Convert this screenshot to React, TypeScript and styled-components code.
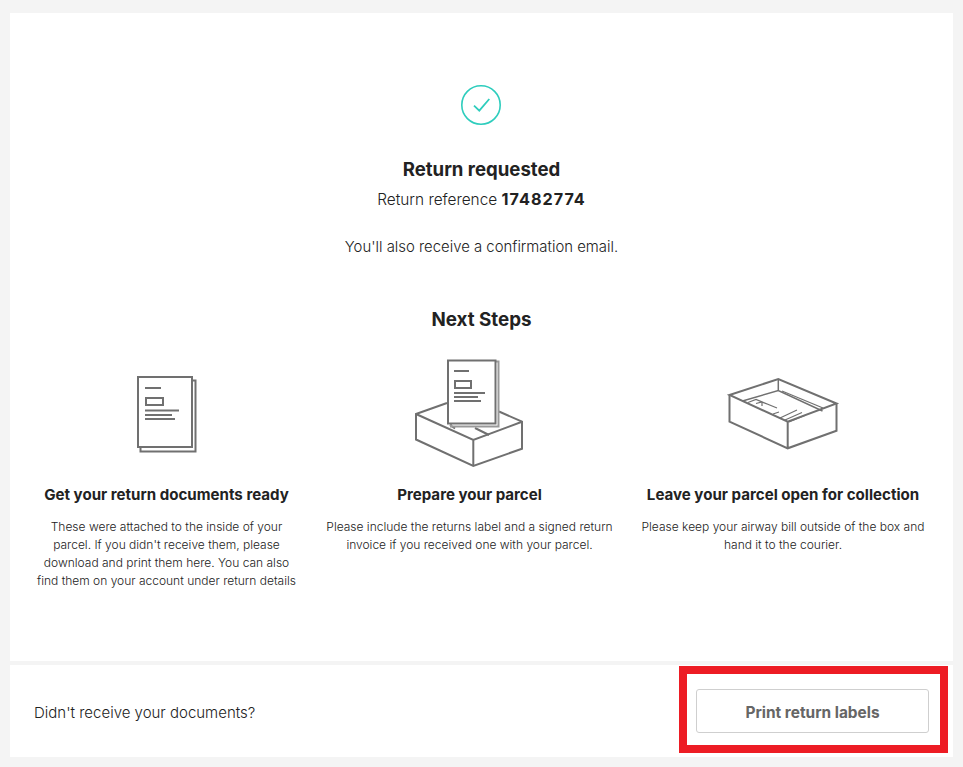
import React from "react";
import styled, { createGlobalStyle } from "styled-components";

const Global = createGlobalStyle`
  html, body { margin: 0; padding: 0; background: #f4f4f4; }
  body { font-family: "Inter", "Liberation Sans", sans-serif; color: #222; }
  * { box-sizing: border-box; }
`;

const Page = styled.div`
  width: 963px;
  height: 767px;
  padding: 13px 10px 10px;
  display: flex;
  flex-direction: column;
  gap: 4px;
  background: #f4f4f4;
`;

const Card = styled.section`
  height: 648px;
  background: #fff;
  display: flex;
  flex-direction: column;
  align-items: center;
  padding-top: 72px;
`;

const CheckSvg = styled.svg`
  display: block;
  margin-right: 1px;
  fill: none;
  stroke: #2ecdbd;
  stroke-width: 1.6;
`;

const Title = styled.h1`
  margin: 30px 0 0;
  font-size: 18.6px;
  line-height: 28px;
  font-weight: 700;
`;

const Reference = styled.p`
  margin: 2px 0 0;
  font-size: 15.4px;
  line-height: 28px;
  font-weight: 300;
  b { font-size: 16.2px; font-weight: 700; letter-spacing: 1px; }
`;

const Note = styled.p`
  margin: 19px 0 0;
  font-size: 14.9px;
  line-height: 28px;
  font-weight: 300;
`;

const StepsHeading = styled.h2`
  margin: 45px 0 0;
  font-size: 18.8px;
  line-height: 28px;
  font-weight: 700;
`;

const Steps = styled.div`
  align-self: stretch;
  display: grid;
  grid-template-columns: 269px 303px 290px;
  column-gap: 17px;
  padding-left: 22px;
  margin-top: 16px;
`;

const Step = styled.article`
  display: flex;
  flex-direction: column;
  align-items: center;
  text-align: center;
`;

const Art = styled.svg`
  display: block;
  width: 130px;
  height: 110px;
  fill: none;
  stroke: #707070;
  stroke-width: 2;
  overflow: visible;
`;

const StepTitle = styled.h3`
  margin: 24px 0 0;
  font-size: 15.1px;
  line-height: 22px;
  font-weight: 700;
  white-space: nowrap;
`;

const StepText = styled.p`
  margin: 12px 0 0;
  font-size: 12px;
  line-height: 18px;
  font-weight: 300;
  white-space: nowrap;
`;

const Footer = styled.footer`
  height: 92px;
  background: #fff;
  display: flex;
  justify-content: space-between;
  padding: 1px 5px 4px 24px;
`;

const Question = styled.span`
  align-self: center;
  margin-top: 5px;
  font-size: 15px;
  font-weight: 300;
`;

const Highlight = styled.div`
  width: 269px;
  border: 8px solid #ed1c24;
  padding: 15px 11px 12px 9px;
  display: flex;
`;

const PrintButton = styled.button`
  flex: 1;
  background: #fff;
  border: 1px solid #cfcfcf;
  border-radius: 3px;
  color: #666;
  padding: 2px 0 0;
  font: 700 15.4px "Inter", "Liberation Sans", sans-serif;
`;

const CheckIcon = () => (
  <CheckSvg width="40" height="40" viewBox="0 0 40 40">
    <circle cx="20" cy="20" r="19.2" />
    <path d="M13 20.7 L18.3 25.7 L28.3 14" strokeWidth="1.8" />
  </CheckSvg>
);

const DocsIcon = () => (
  <Art viewBox="102 350 130 110">
    <path d="M193 380.5h2.5v71h-55v-4" />
    <rect x="138" y="377" width="54" height="70" />
    <path d="M145 388h16M145 410.5h34M145 415h27M145 419h30" />
    <rect x="146" y="398" width="17" height="7" />
  </Art>
);

const ParcelIcon = () => (
  <Art viewBox="405 350 130 110">
    <path d="M447 403 L416 414 V439.5 L473.3 466 L522 448.7 V421.7 L499 411.5" />
    <path d="M416 414 L473.3 440 L522 421.7 M473.3 440 V466" />
    <path d="M450 425 L455 428.5 M475 428 L489 435" />
    <path d="M496 361.5 H498.5 V426.5 H451 V424" stroke="#999" />
    <rect x="448" y="360.5" width="47.5" height="63" fill="#fff" />
    <path d="M454 371h15M454 393h31M454 397h24M454 401h27" />
    <rect x="455" y="381" width="16" height="7" />
  </Art>
);

const TrayIcon = () => (
  <Art viewBox="718 350 130 110">
    <path d="M729.5 395 L778.3 379 L836.5 403.5 L787.7 421.7 Z" />
    <path d="M729.5 395 V421.7 L787.7 448.3 L836.5 430.7 V403.5 M787.7 421.7 V448.3" />
    <path d="M778.3 379 V391 M742.5 401 L778.3 390.5 L822.5 411" strokeWidth="1.5" />
    <path d="M782 391 L823 408" strokeWidth="1.2" />
    <path d="M748 402.5 L756 399.5 L777 408 M756 403.5 L762 402 L767 404 M762 402 V406 M779 412 L773 414" strokeWidth="1.2" />
    <path d="M780 418 L797 410 M785 420 L802 412.5 M789 422 L806 415" strokeWidth="1.2" />
  </Art>
);

export default function App() {
  return (
    <Page>
      <Global />
      <Card>
        <CheckIcon />
        <Title>Return requested</Title>
        <Reference>Return reference <b>17482774</b></Reference>
        <Note>You'll also receive a confirmation email.</Note>
        <StepsHeading>Next Steps</StepsHeading>
        <Steps>
          <Step>
            <DocsIcon />
            <StepTitle>Get your return documents ready</StepTitle>
            <StepText>
              These were attached to the inside of your<br />
              parcel. If you didn't receive them, please<br />
              download and print them here. You can also<br />
              find them on your account under return details
            </StepText>
          </Step>
          <Step>
            <ParcelIcon />
            <StepTitle>Prepare your parcel</StepTitle>
            <StepText>
              Please include the returns label and a signed return<br />
              invoice if you received one with your parcel.
            </StepText>
          </Step>
          <Step>
            <TrayIcon />
            <StepTitle>Leave your parcel open for collection</StepTitle>
            <StepText>
              Please keep your airway bill outside of the box and<br />
              hand it to the courier.
            </StepText>
          </Step>
        </Steps>
      </Card>
      <Footer>
        <Question>Didn't receive your documents?</Question>
        <Highlight>
          <PrintButton>Print return labels</PrintButton>
        </Highlight>
      </Footer>
    </Page>
  );
}
